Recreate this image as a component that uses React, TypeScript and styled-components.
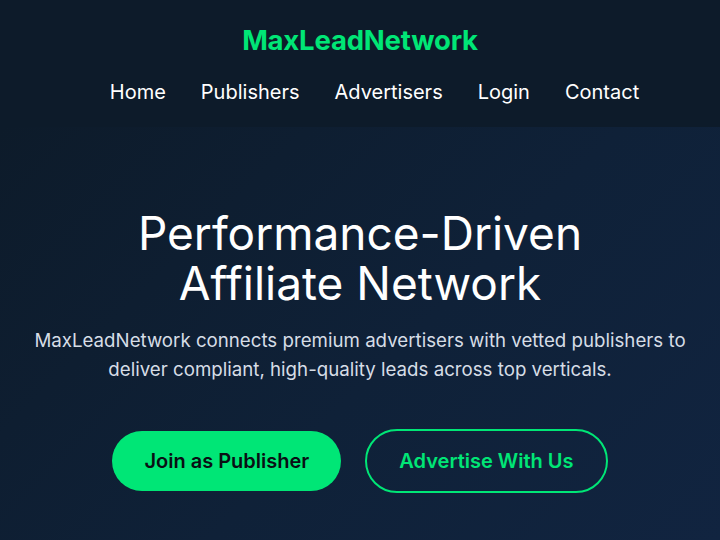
import styled, { createGlobalStyle } from "styled-components";

const GlobalStyle = createGlobalStyle`
	* {
		box-sizing: border-box;
	}

	body {
		margin: 0;
		font-family: Inter, "Open Sans", sans-serif;
		background: #0d1b2a;
		color: #ffffff;
	}
`;

const Page = styled.div`
	min-height: 540px;
	display: flex;
	flex-direction: column;
`;

const Header = styled.header`
	height: 127px;
	background: #0d1b2a;
	display: flex;
	flex-direction: column;
	align-items: center;
	padding-top: 22px;

	.logo {
		color: #00e676;
		font-weight: 700;
		font-size: 27.5px;
		line-height: 36px;
		letter-spacing: -0.2px;
	}

	nav {
		display: flex;
		gap: 35px;
		margin-top: 19px;
		padding-left: 29px;

		a {
			color: #ffffff;
			text-decoration: none;
			font-size: 20px;
			line-height: 30px;
			font-weight: 400;
		}
	}
`;

const Hero = styled.section`
	flex: 1;
	background: linear-gradient(135deg, #0d1b2a 0%, #0f2138 55%, #112440 100%);
	display: flex;
	flex-direction: column;
	align-items: center;
	text-align: center;
	padding: 81px 24px 40px;

	h1 {
		margin: 0;
		font-size: 46px;
		line-height: 50px;
		font-weight: 400;
	}

	p {
		margin: 18px 0 0;
		font-size: 18.7px;
		line-height: 29px;
		color: #d6dde6;
		white-space: nowrap;
	}
`;

const Actions = styled.div`
	display: flex;
	align-items: center;
	gap: 24px;
	margin-top: 45px;
`;

const Button = styled.a<{ $outline?: boolean }>`
	display: inline-flex;
	align-items: center;
	justify-content: center;
	border-radius: 32px;
	font-size: 20px;
	font-weight: 600;
	text-decoration: none;
	height: ${(p) => (p.$outline ? "64px" : "60px")};
	padding: 0 32px;
	background: ${(p) => (p.$outline ? "transparent" : "#00e676")};
	color: ${(p) => (p.$outline ? "#00e676" : "#0a0f14")};
	border: ${(p) => (p.$outline ? "2px solid #00e676" : "none")};
`;

export default function App() {
	return (
		<Page>
			<GlobalStyle />
			<Header>
				<div className="logo">MaxLeadNetwork</div>
				<nav>
					<a href="#">Home</a>
					<a href="#">Publishers</a>
					<a href="#">Advertisers</a>
					<a href="#">Login</a>
					<a href="#">Contact</a>
				</nav>
			</Header>
			<Hero>
				<h1>
					Performance-Driven
					<br />
					Affiliate Network
				</h1>
				<p>
					MaxLeadNetwork connects premium advertisers with vetted publishers to
					<br />
					deliver compliant, high-quality leads across top verticals.
				</p>
				<Actions>
					<Button href="#">Join as Publisher</Button>
					<Button href="#" $outline>
						Advertise With Us
					</Button>
				</Actions>
			</Hero>
		</Page>
	);
}
